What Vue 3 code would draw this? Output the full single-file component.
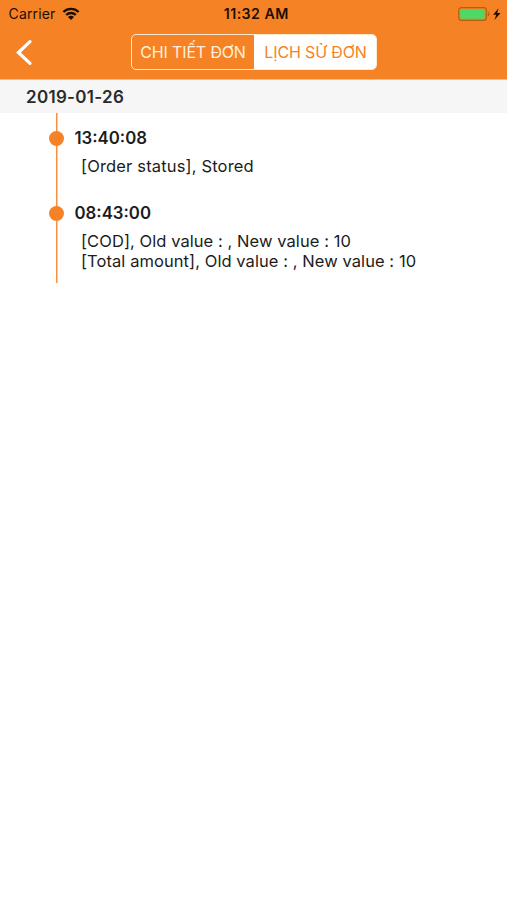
<script setup>
const date = '2019-01-26'
const events = [
  { time: '13:40:08', lines: ['[Order status], Stored'], wide: true },
  { time: '08:43:00', lines: ['[COD], Old value : , New value : 10', '[Total amount], Old value : , New value : 10'] },
]
</script>

<template>
  <main class="screen">
    <header class="header">
      <div class="status">
        <div class="carrier">
          <span class="carrier-name">Carrier</span>
          <svg class="wifi" width="18" height="14" viewBox="0 0 18 14">
            <path d="M1.4 5a10.8 10.8 0 0 1 15.2 0M4.2 8a6.8 6.8 0 0 1 9.6 0" fill="none" stroke="#1d0e02" stroke-width="2.3" />
            <path d="M6 10a4.2 4.2 0 0 1 6 0L9 13.1z" fill="#1d0e02" />
          </svg>
        </div>
        <span class="clock">11:32 AM</span>
        <div class="power">
          <svg width="44" height="14" viewBox="0 0 44 14">
            <rect x="0.7" y="0.7" width="27.6" height="12.6" rx="2.6" fill="none" stroke="#b4600f" stroke-width="1.2" />
            <rect x="2.2" y="2.2" width="24.4" height="9.6" rx="1.2" fill="#4cd964" />
            <path d="M29.8 4.7q1.7.6 1.7 2.3t-1.7 2.3z" fill="#b4600f" />
            <path d="M40.6 1.2L35.1 7.7h3.1l-1.7 5.2 6-6.9h-3.3z" fill="#1d0e02" />
          </svg>
        </div>
      </div>
      <nav class="nav">
        <button class="back" aria-label="Back">
          <svg width="18" height="28" viewBox="0 0 18 28">
            <path d="M15 2.6L3.4 13.5L15 24.4" fill="none" stroke="#fff" stroke-width="3.2" stroke-linecap="round" stroke-linejoin="miter" />
          </svg>
        </button>
        <div class="tabs">
          <button class="tab">CHI TIẾT ĐƠN</button>
          <button class="tab active">LỊCH SỬ ĐƠN</button>
        </div>
      </nav>
    </header>
    <h2 class="date">{{ date }}</h2>
    <section class="timeline">
      <article v-for="event in events" :key="event.time" class="event">
        <div class="rail"><i class="dot"></i></div>
        <div class="body">
          <h3 class="time">{{ event.time }}</h3>
          <p v-for="line in event.lines" :key="line" class="line" :class="{ wide: event.wide }">{{ line }}</p>
        </div>
      </article>
    </section>
  </main>
</template>

<style>
body { margin: 0; background: #fff; }
</style>

<style scoped>
.screen { min-height: 900px; background: #fff; font-family: Inter, "Liberation Sans", sans-serif; color: #1c1c1c; }
.header { box-sizing: border-box; height: 80px; border-bottom: 1px solid #f9b889; background: #f68226; }
.status { display: grid; grid-template-columns: 1fr auto 1fr; height: 27px; align-items: center; padding: 0 4px 0 8.5px; color: #1d0e02; }
.carrier { display: flex; align-items: center; gap: 6.5px; }
.carrier-name { font-size: 14px; line-height: 27px; letter-spacing: 0.15px; }
.wifi { display: block; }
.clock { font-size: 14.2px; font-weight: 600; line-height: 27px; letter-spacing: 0.45px; margin-right: -1px; }
.power { display: flex; justify-content: flex-end; padding-right: 1px; }
.power svg { display: block; }
.nav { display: grid; grid-template-columns: 131px 246px; height: 52px; align-items: start; }
.back { border: 0; background: none; padding: 12px 0 0 15px; text-align: left; }
.back svg { display: block; }
.tabs { display: grid; grid-template-columns: 121.5px 1fr; box-sizing: border-box; height: 36px; margin-top: 7px; border: 1.5px solid #ffe9cf; border-radius: 5px; overflow: hidden; }
.tab { display: flex; align-items: center; justify-content: center; border: 0; padding: 0; background: none; color: #fff0d9; font: 400 16px/20px Inter, "Liberation Sans", sans-serif; letter-spacing: -0.14px; white-space: nowrap; }
.tabs { grid-template-columns: 122px 1fr; }
.tab.active { padding-left: 1px; background: #fff; color: #f68226; }
.date { display: flex; align-items: center; height: 33px; margin: 0; padding-left: 26px; background: #f6f6f6; font-size: 17px; font-weight: 600; letter-spacing: 0.3px; color: #2a2a2a; }
.event { display: flex; min-height: 75px; }
.rail { display: flex; justify-content: center; width: 15px; margin-left: 49px; background: linear-gradient(#f98f40, #f98f40) center / 1.5px 100% no-repeat; }
.dot { width: 15px; height: 15px; margin-top: 18px; border-radius: 50%; background: #f68226; }
.body { padding: 15px 0 12px 10.5px; }
.time { margin: 0 0 8px; font-size: 16.8px; line-height: 20px; font-weight: 600; }
.line { margin: 0 0 0 6.5px; font-size: 16.5px; line-height: 20px; letter-spacing: 0.07px; white-space: nowrap; }
.line.wide { letter-spacing: 0.16px; }
</style>
